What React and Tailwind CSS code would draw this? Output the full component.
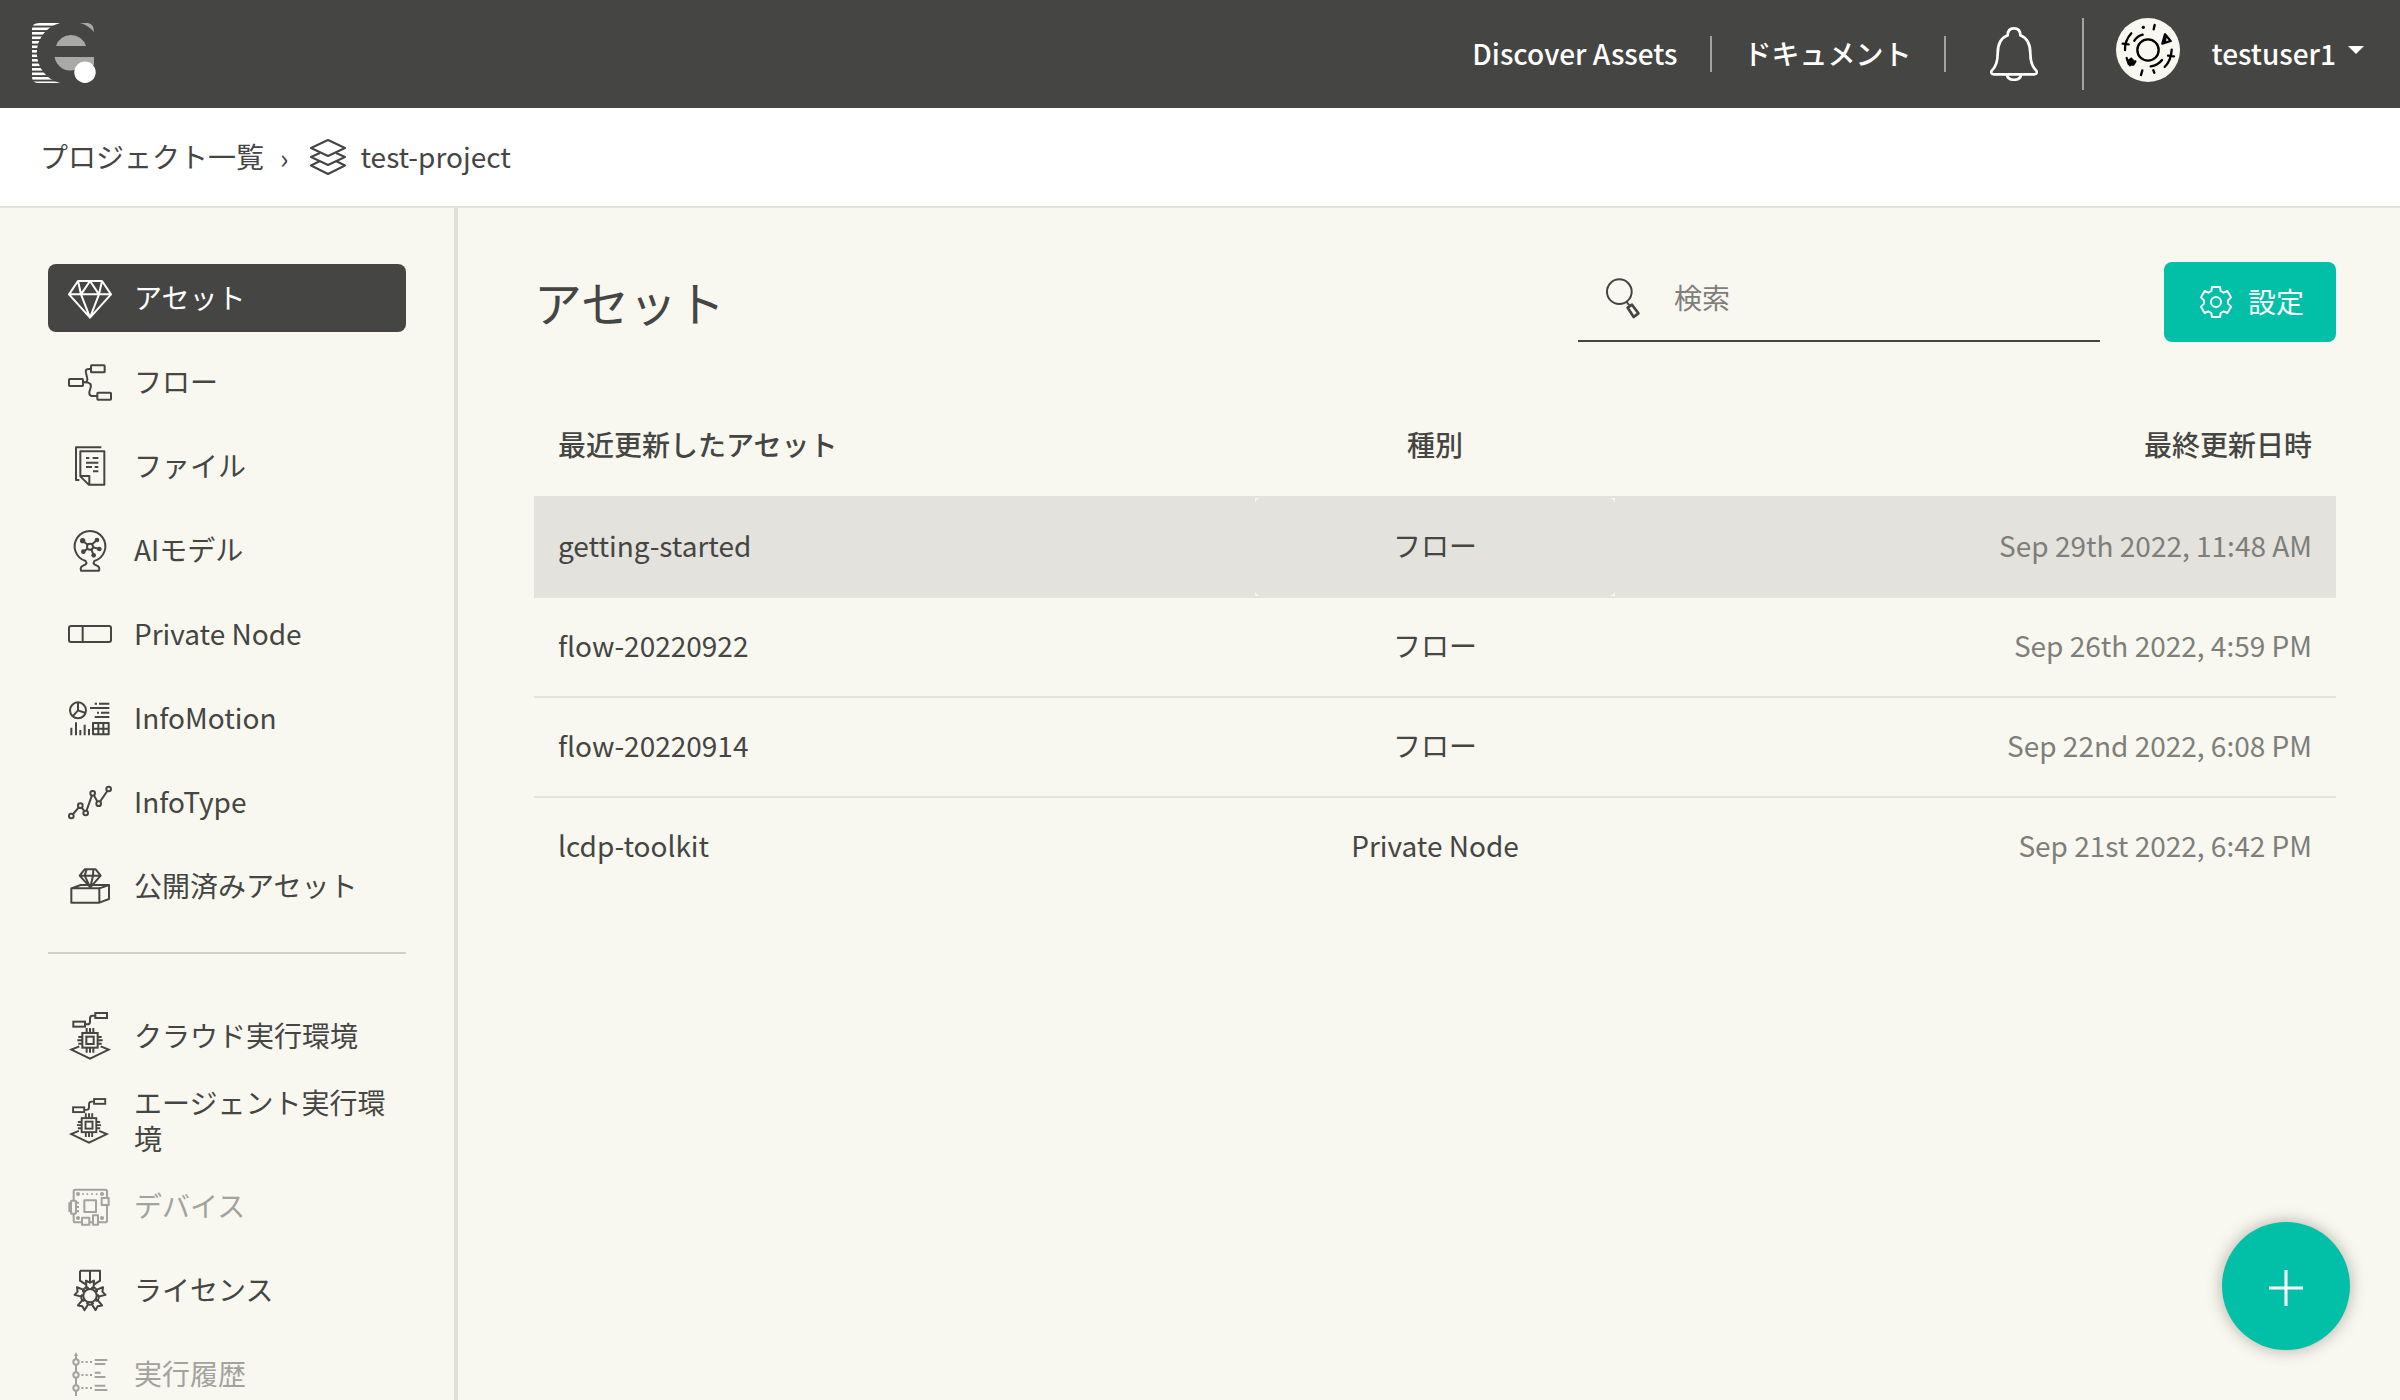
import { useState } from "react";

const STRIPES = Array.from({ length: 14 }, (_, i) => i * 4.5);

const Logo = () => (
  <svg viewBox="0 0 64 62" className="h-[62px] w-16" aria-hidden="true">
    <clipPath id="logo-left">
      <path d="M7 0H28A31 31 0 0 0 28 60H7Q0 60 0 54V6Q0 0 7 0Z" />
    </clipPath>
    <g clipPath="url(#logo-left)" fill="#fff">
      {STRIPES.map((y) => (
        <rect key={y} x="0" y={y} width="30" height="2.6" />
      ))}
    </g>
    <g fill="#a9a9a8">
      <path d="M48 0H56Q62 1 62 9Q56 2 48 0Z" />
      <path d="M24 23A15.7 15.7 0 0 1 54 23Z" />
      <path d="M22.5 34H62V42L44 46.500A16 16 0 0 1 22.500 34Z" />
    </g>
    <circle cx="53" cy="49.300" r="10.700" fill="#fff" />
  </svg>
);

const BellIcon = () => (
  <svg viewBox="0 0 144 162" className="h-[54px] w-12" fill="none" stroke="currentColor" strokeWidth="8">
    <path d="M12 142H132C142 142 142 134 138 130C128 120 121 108 121 80C121 50 110 32 91 25C91 12 84 4 72 4C60 4 53 12 53 25C34 32 23 50 23 80C23 108 16 120 6 130C2 134 2 142 12 142Z" />
    <path d="M51 144C54 163 90 163 93 144" />
  </svg>
);

const Avatar = () => (
  <svg viewBox="0 0 192 192" className="size-16" fill="none" stroke="#000" strokeWidth="7" strokeLinecap="round" strokeLinejoin="round">
    <circle cx="96" cy="96" r="96" fill="#f8f8f0" stroke="none" />
    <circle cx="96" cy="96" r="32" />
    <circle cx="82" cy="28" r="5" fill="#000" stroke="none" />
    <path d="M116 21L113 34M79 157L75 171M112 157L115 164" />
    <path d="M147 49L139 77L164 69ZM148 60L147 72" />
    <path d="M46 46Q26 68 27 96M20 77L38 79M80 50Q64 54 55 68" />
    <path d="M167 95Q166 126 146 147M156 113L174 115M138 126Q126 142 104 145" />
    <path d="M32 120L38 138L52 140L58 130L44 134L46 122L36 130L42 142L50 126" />
  </svg>
);

const LayersIcon = () => (
  <svg viewBox="0 0 36 36" className="size-9" fill="none" stroke="currentColor" strokeWidth="2" strokeLinejoin="round">
    <path d="M1 9L18 1L35 9L18 17Z" />
    <path d="M10 14L1 18L18 26L35 18L26 14" />
    <path d="M10 22L1 26.500L18 35L35 26.500L26 22" />
  </svg>
);

const SearchIcon = () => (
  <svg viewBox="0 0 102 123" className="h-[41px] w-[34px] shrink-0" fill="none" stroke="currentColor" strokeWidth="6">
    <circle cx="40" cy="41" r="37" />
    <path d="M62 72L70 82" />
    <path d="M65 89L78 80L97 106L83 117Z" strokeWidth="8" strokeLinejoin="round" />
  </svg>
);

const GearIcon = () => (
  <svg viewBox="0 0 96 96" className="size-8" fill="none" stroke="currentColor" strokeWidth="6" strokeLinejoin="round">
    <path d="M36 3H60L62 15L71 20L82 15L93 34L84 43V53L93 62L82 81L71 76L62 81L60 93H36L34 81L25 76L14 81L3 62L12 53V43L3 34L14 15L25 20L34 15Z" />
    <circle cx="48" cy="48" r="15" />
  </svg>
);

const RuntimeShape = () => (
  <>
    <rect x="82" y="3" width="35" height="15" />
    <rect x="16" y="29" width="35" height="15" />
    <path d="M51 37H58Q66 37 66 29V19Q66 11 74 11H82" />
    <rect x="43" y="63" width="46" height="44" />
    <rect x="55" y="74" width="22" height="22" />
    <path d="M56 48V62M66 48V62M76 48V62M56 108V122M66 108V122M76 108V122" />
    <path d="M31 75H43M28 85H43M31 95H43M89 75H101M89 85H104M89 95H101" />
    <path d="M34 103L10 113L66 140L122 113L98 103" />
  </>
);

const icons = {
  asset: (
    <path d="M30 15H102L129 55L66 125L3 55ZM3 55H129M30 15L39 55L66 15L93 55L102 15M39 55L66 125L93 55" />
  ),
  flow: (
    <>
      <rect x="69" y="16" width="41" height="21" rx="2" />
      <rect x="3" y="57" width="42" height="21" rx="2" />
      <rect x="88" y="98" width="41" height="21" rx="2" />
      <path d="M69 27H62C50 27 53 36 56 47C59 58 60 67 48 67H45" />
      <path d="M50 67C66 67 72 72 67 86C62 99 62 108 74 108H88" />
    </>
  ),
  file: (
    <>
      <path d="M100 10H24V108H34" />
      <path d="M37 22H109V122H62L37 97ZM37 96H64V122" />
      <path d="M54 42H64M74 42H91M54 56H91M54 69H72M80 69H91M75 82H91" />
    </>
  ),
  model: (
    <>
      <path d="M53 99A46 46 0 1 1 79 99C74 106 78 110 85 112C93 115 95 122 93 128H39C37 122 39 115 47 112C54 110 58 106 53 99Z" />
      <circle cx="66" cy="56" r="9" />
      <path d="M59 50L44 38M72 49L87 36M75 58L94 63M70 64L77 82M59 62L46 71" />
      <g fill="currentColor" stroke="none">
        <circle cx="44" cy="38" r="8" />
        <circle cx="87" cy="36" r="7" />
        <circle cx="94" cy="63" r="7" />
        <circle cx="77" cy="82" r="7" />
        <circle cx="46" cy="71" r="7" />
      </g>
    </>
  ),
  node: (
    <>
      <rect x="3" y="42" width="126" height="48" rx="6" />
      <path d="M44 42V90" />
    </>
  ),
  motion: (
    <>
      <circle cx="30" cy="43" r="24" />
      <path d="M30 19V43L14 61M30 43L53 51" />
      <path d="M80 23H87M93 23H124M66 36H124M87 50H93M99 50H124M80 63H124" />
      <path d="M10 95V118M24 79V118M37 102V118M50 86V118M63 99V118" />
      <path d="M75 81H122V115H75ZM91 81V115M106 81V115M75 98H122" />
    </>
  ),
  type: (
    <>
      <path d="M10 108L37 77L53 99L74 40L92 71L122 27" />
      <g fill="#f8f8f0">
        <circle cx="10" cy="108" r="7" />
        <circle cx="37" cy="77" r="7" />
        <circle cx="53" cy="99" r="7" />
        <circle cx="74" cy="40" r="7" />
        <circle cx="92" cy="71" r="7" />
        <circle cx="122" cy="27" r="7" />
      </g>
    </>
  ),
  published: (
    <>
      <path d="M50 16H83L98 35L67 70L35 35ZM35 35H98M56 16L50 35L67 70M76 16L75 35L67 70" />
      <path d="M10 73H94V116H10ZM10 73L38 63H60M74 63H123L94 73M123 63V105L94 116" />
    </>
  ),
  device: (
    <>
      <rect x="17" y="17" width="100" height="98" rx="5" />
      <rect x="49" y="49" width="35" height="35" />
      <g fill="#f8f8f0">
        <rect x="101" y="42" width="21" height="21" />
        <rect x="42" y="101" width="22" height="21" />
        <rect x="75" y="94" width="15" height="28" />
        <rect x="9" y="50" width="15" height="39" rx="2" />
      </g>
      <path d="M4 55V84M25 56H33M25 69H33M25 82H33" />
      <g fill="currentColor" stroke="none">
        <circle cx="30" cy="30" r="6" />
        <circle cx="102" cy="30" r="6" />
        <circle cx="30" cy="102" r="6" />
        <circle cx="102" cy="102" r="6" />
        <circle cx="45" cy="30" r="3" />
        <circle cx="58" cy="30" r="3" />
        <circle cx="72" cy="30" r="3" />
        <circle cx="86" cy="30" r="3" />
      </g>
    </>
  ),
  license: (
    <>
      <path d="M36 8H96V38L78 50M36 8V38L54 50M66 8V46" />
      <circle cx="66" cy="83" r="20" />
      {[0, 72, 144, 216, 288].map((angle) => (
        <g key={angle} transform={`rotate(${angle} 66 83)`}>
          <path d="M61 64L55 56L54 38L66 44L78 38L77 56L71 64" />
          <path d="M56 104A11 11 0 0 0 76 104" />
        </g>
      ))}
    </>
  ),
  history: (
    <>
      <path d="M24 8V22M24 38V61M24 77V100M24 116V132" />
      <circle cx="24" cy="30" r="8" />
      <circle cx="24" cy="69" r="8" />
      <circle cx="24" cy="108" r="8" />
      <path d="M18 12L24 0L30 12Z" fill="currentColor" stroke="none" />
      <path d="M40 30H46M53 30H59M66 30H72M40 69H46M53 69H59M66 69H72M40 108H46M53 108H59M66 108H72" />
      <path d="M80 24H118M80 36H112M80 62H98M80 75H112M80 101H112M80 114H118" />
    </>
  ),
};

const NavIcon = ({ name }) => {
  if (name === "cloud" || name === "agent") {
    return (
      <svg
        viewBox="0 0 132 144"
        className={name === "cloud" ? "h-12 w-11 shrink-0" : "mr-[2px] h-[46px] w-[42px] shrink-0"}
        fill="none"
        stroke="currentColor"
        strokeWidth="6"
      >
        <RuntimeShape />
      </svg>
    );
  }

  return (
    <svg viewBox="0 0 132 132" className="size-11 shrink-0" fill="none" stroke="currentColor" strokeWidth="6" strokeLinejoin="round">
      {icons[name]}
    </svg>
  );
};

const assetLinks = [
  { icon: "asset", label: "アセット", active: true },
  { icon: "flow", label: "フロー" },
  { icon: "file", label: "ファイル" },
  { icon: "model", label: "AIモデル" },
  { icon: "node", label: "Private Node" },
  { icon: "motion", label: "InfoMotion" },
  { icon: "type", label: "InfoType" },
  { icon: "published", label: "公開済みアセット" },
];

const runtimeLinks = [
  { icon: "cloud", label: "クラウド実行環境" },
  { icon: "agent", label: "エージェント実行環境" },
  { icon: "device", label: "デバイス", disabled: true },
  { icon: "license", label: "ライセンス" },
  { icon: "history", label: "実行履歴", disabled: true },
];

const rows = [
  { name: "getting-started", kind: "フロー", updated: "Sep 29th 2022, 11:48 AM", selected: true },
  { name: "flow-20220922", kind: "フロー", updated: "Sep 26th 2022, 4:59 PM" },
  { name: "flow-20220914", kind: "フロー", updated: "Sep 22nd 2022, 6:08 PM" },
  { name: "lcdp-toolkit", kind: "Private Node", updated: "Sep 21st 2022, 6:42 PM" },
];

const NavList = ({ links }) => (
  <ul className="flex flex-col gap-4">
    {links.map((link) => {
      let tone = "text-[#454543]";
      if (link.active) tone = "bg-[#454543] text-white";
      if (link.disabled) tone = "text-[#a2a29e]";

      return (
        <li key={link.label}>
          <a
            href="#"
            aria-current={link.active ? "page" : undefined}
            aria-disabled={link.disabled}
            className={`flex min-h-[68px] items-center gap-[22px] rounded-lg px-5 leading-9 ${tone}`}
          >
            <NavIcon name={link.icon} />
            <span className="-mt-[2px]">{link.label}</span>
          </a>
        </li>
      );
    })}
  </ul>
);

const Header = () => (
  <header className="flex h-[108px] shrink-0 items-center justify-between bg-[#454543] pr-9 pl-8 font-medium text-white">
    <a href="#" aria-label="Home">
      <Logo />
    </a>
    <div className="flex items-center">
      <a href="#" className="pb-[2px]">Discover Assets</a>
      <span className="mx-8 h-9 w-[2px] bg-[#a2a29e]" />
      <a href="#" className="pb-[2px]">ドキュメント</a>
      <span className="mx-8 h-9 w-[2px] bg-[#a2a29e]" />
      <button type="button" aria-label="Notifications" className="mx-3">
        <BellIcon />
      </button>
      <span className="mx-8 h-[72px] w-[2px] bg-[#a2a29e]" />
      <button type="button" className="flex items-center">
        <span className="mb-2">
          <Avatar />
        </span>
        <span className="ml-8 pb-[2px]">testuser1</span>
        <svg viewBox="0 0 16 8" className="mb-2 ml-3 h-2 w-4" fill="currentColor">
          <path d="M0 0H16L8 8Z" />
        </svg>
      </button>
    </div>
  </header>
);

const App = () => {
  const [query, setQuery] = useState("");
  const visibleRows = rows.filter((row) => row.name.includes(query));

  return (
    <div className="flex h-screen flex-col overflow-hidden bg-[#f8f8f0] font-['Noto_Sans_CJK_JP',sans-serif] text-[28px] leading-10 text-[#454543]">
      <Header />

      <nav className="flex h-[100px] shrink-0 items-center border-b-2 border-[#e3e2dd] bg-white pl-10">
        <a href="#" className="pb-[2px]">プロジェクト一覧</a>
        <span className="mr-[22px] ml-4">›</span>
        <a href="#" className="flex items-center gap-[14px]">
          <LayersIcon />
          <span className="pb-[2px]">test-project</span>
        </a>
      </nav>

      <div className="flex min-h-0 flex-1">
        <aside className="w-[458px] shrink-0 overflow-y-auto border-r-4 border-[#e0e0d8] pt-14 pr-12 pl-12 [scrollbar-width:none]">
          <NavList links={assetLinks} />
          <hr className="mt-8 mb-12 border-t-2 border-[#d0d0ca]" />
          <NavList links={runtimeLinks} />
        </aside>

        <main className="min-w-0 flex-1 pt-[54px] pr-16 pl-[76px]">
          <div className="flex items-center">
            <h1 className="flex-1 pb-[2px] text-[48px] leading-[64px]">アセット</h1>
            <label className="flex h-20 w-[522px] items-center gap-[34px] border-b-2 border-[#454543] pb-[6px] pl-7">
              <SearchIcon />
              <input
                type="text"
                value={query}
                onChange={(event) => setQuery(event.target.value)}
                placeholder="検索"
                aria-label="検索"
                className="min-w-0 flex-1 pb-[2px] outline-none placeholder:text-[#7e7e7b]"
              />
            </label>
            <button
              type="button"
              className="ml-16 flex h-20 items-center gap-4 rounded-lg bg-[#02c0a7] pr-8 pl-9 text-white"
            >
              <GearIcon />
              <span className="pb-[2px]">設定</span>
            </button>
          </div>

          <table className="mt-[54px] w-full table-fixed border-separate border-spacing-0">
            <thead>
              <tr className="h-[100px]">
                <th className="w-2/5 px-6 pb-1 text-left font-medium">最近更新したアセット</th>
                <th className="w-1/5 px-6 pb-1 text-center font-medium">種別</th>
                <th className="w-2/5 px-6 pb-1 text-right font-medium">最終更新日時</th>
              </tr>
            </thead>
            <tbody>
              {visibleRows.map((row) => {
                const cell = row.selected ? "border-y-2 border-[#e3e2dd]" : "border-b-2 border-[#e3e2dd]";
                const fill = row.selected ? "bg-[#e3e2dd]" : "";

                return (
                  <tr key={row.name} className="group">
                    <td className={`p-0 group-last:border-b-0 ${cell}`}>
                      <div className={`flex h-[98px] items-center px-6 pb-1 ${fill}`}>{row.name}</div>
                    </td>
                    <td className={`p-0 group-last:border-b-0 ${cell}`}>
                      <div className={`flex h-[98px] items-center justify-center rounded-md px-6 pb-1 ${fill}`}>{row.kind}</div>
                    </td>
                    <td className={`p-0 group-last:border-b-0 ${cell}`}>
                      <div className={`flex h-[98px] items-center justify-end px-6 pb-1 text-[#7e7e7b] ${fill}`}>{row.updated}</div>
                    </td>
                  </tr>
                );
              })}
            </tbody>
          </table>
        </main>
      </div>

      <button
        type="button"
        aria-label="Add asset"
        className="fixed right-[50px] bottom-[50px] flex size-32 items-center justify-center rounded-full bg-[#02c0a7] text-white shadow-[0_0_16px_rgba(69,60,50,0.4)]"
      >
        <svg viewBox="0 0 36 36" className="mt-1 size-9" stroke="currentColor" strokeWidth="3">
          <path d="M18 0V36M1 18H35" />
        </svg>
      </button>
    </div>
  );
};

export default App;
